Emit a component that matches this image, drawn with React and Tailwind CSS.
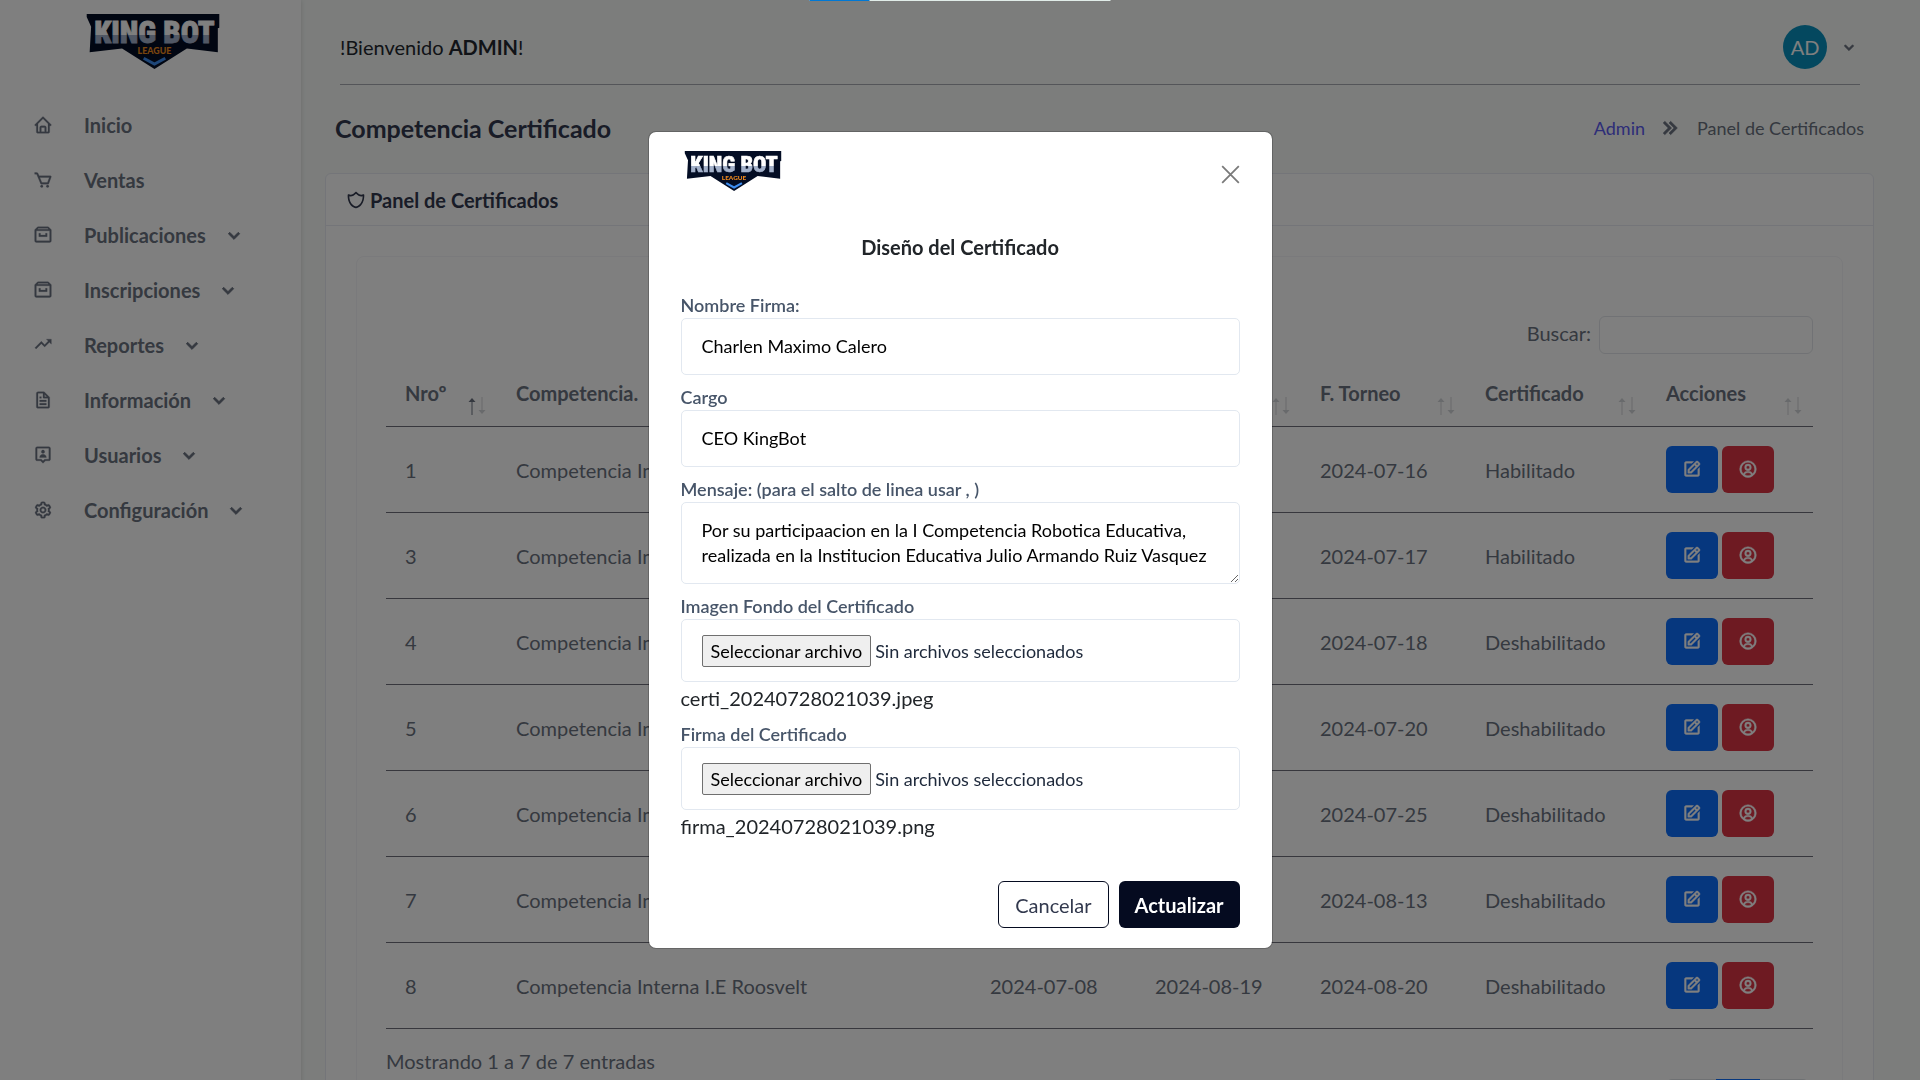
import React from "react";
import {
  BiHome, BiCart, BiArchive, BiTrendingUp, BiFile, BiUserPin, BiCog,
  BiChevronDown, BiChevronLeft, BiChevronRight, BiChevronsRight, BiEdit, BiUserCircle, BiShieldAlt2,
} from "react-icons/bi";

function Logo({ className }) {
  const id = React.useId();
  return (
    <svg viewBox="0 0 135 56" className={className} role="img" aria-label="King Bot League">
      <defs>
        <linearGradient id={id} gradientUnits="userSpaceOnUse" x1="0" y1="0" x2="0" y2="40">
          <stop offset="0.53" stopColor="#ffffff" />
          <stop offset="0.53" stopColor="#a3b1ca" />
        </linearGradient>
      </defs>
      <path d="M0 0H135V14L133.500 14.500V39L102 35L69 56L36 35L3 39L4.500 13L0 3Z" fill="#030d24" />
      <text x="69" y="30" textAnchor="middle" fontFamily="Roboto Condensed, Roboto" fontWeight="900" fontSize="31" fill={`url(#${id})`} stroke={`url(#${id})`} strokeWidth="0.8">KING BOT</text>
      <text x="69" y="41" textAnchor="middle" fontFamily="Lato" fontWeight="900" fontSize="9" fill="#f08a1d">LEAGUE</text>
      <path d="M58 45L69 51L80 45" fill="none" stroke="#3d8df0" strokeWidth="3" />
    </svg>
  );
}

const nav = [
  ["Inicio", BiHome, false],
  ["Ventas", BiCart, false],
  ["Publicaciones", BiArchive, true],
  ["Inscripciones", BiArchive, true],
  ["Reportes", BiTrendingUp, true],
  ["Información", BiFile, true],
  ["Usuarios", BiUserPin, true],
  ["Configuración", BiCog, true],
];

function Sidebar() {
  return (
    <aside className="w-[301px] shrink-0 bg-white shadow-[0_0_5px_rgba(0,0,0,0.15)]">
      <Logo className="mt-[14px] ml-[86px] h-[55px] w-[134px]" />
      <nav className="mt-7">
        {nav.map(([label, Icon, more]) => (
          <a key={label} href="#" className="flex h-[55px] items-center pl-[33px] text-xl font-bold text-[#6b7280]">
            <Icon className="size-5" stroke="currentColor" strokeWidth="0.3" />
            <span className="ml-[31px]">{label}</span>
            {more && <BiChevronDown className="ml-4 size-6" stroke="currentColor" strokeWidth="0.8" />}
          </a>
        ))}
      </nav>
    </aside>
  );
}

const columns = [
  ["Nroº", "w-[111px]"],
  ["Competencia.", "w-auto"],
  ["F. Inicio", "w-[165px]"],
  ["F. Fin", "w-[165px]"],
  ["F. Torneo", "w-[165px]"],
  ["Certificado", "w-[181px]"],
  ["Acciones", "w-[166px]"],
];

const rows = [
  [1, "Competencia Interna I.E Roosvelt", "2024-07-08", "2024-07-15", "2024-07-16", "Habilitado"],
  [3, "Competencia Interna I.E Roosvelt", "2024-07-08", "2024-07-16", "2024-07-17", "Habilitado"],
  [4, "Competencia Interna I.E Roosvelt", "2024-07-08", "2024-07-17", "2024-07-18", "Deshabilitado"],
  [5, "Competencia Interna I.E Roosvelt", "2024-07-08", "2024-07-19", "2024-07-20", "Deshabilitado"],
  [6, "Competencia Interna I.E Roosvelt", "2024-07-08", "2024-07-24", "2024-07-25", "Deshabilitado"],
  [7, "Competencia Interna I.E Roosvelt", "2024-07-08", "2024-08-12", "2024-08-13", "Deshabilitado"],
  [8, "Competencia Interna I.E Roosvelt", "2024-07-08", "2024-08-19", "2024-08-20", "Deshabilitado"],
];

function SortArrows({ active }) {
  return (
    <svg viewBox="0 0 20 18" className="h-[18px] w-5 shrink-0" fill="none" stroke="currentColor" aria-hidden="true">
      <g opacity={active ? 1 : 0.3}>
        <path d="M5 18V2" />
        <path d="M1.500 5L5 1L8.500 5Z" fill="currentColor" stroke="none" />
      </g>
      <g opacity="0.3">
        <path d="M15 0V16" />
        <path d="M11.500 13L15 17L18.500 13Z" fill="currentColor" stroke="none" />
      </g>
    </svg>
  );
}

function CertTable() {
  return (
    <table className="mt-2 w-full table-fixed text-xl text-[#6b7280]">
      <thead>
        <tr className="h-16 border-b border-[#6f6f7b]">
          {columns.map(([label, width], i) => (
            <th key={label} className={`${width} pt-1.5 pl-[19px] text-left font-bold`}>
              <div className="flex items-start justify-between pr-2.5">
                <span>{label}</span>
                <span className="mt-[18px] leading-none"><SortArrows active={i === 0} /></span>
              </div>
            </th>
          ))}
        </tr>
      </thead>
      <tbody>
        {rows.map((r) => (
          <tr key={r[0]} className="h-[86px] border-b border-[#6f6f7b]">
            {r.map((c, i) => (
              <td key={i} className="pt-0.5 pl-[19px]">{c}</td>
            ))}
            <td className="pl-[19px]">
              <div className="flex gap-1">
                <button type="button" aria-label="Editar" className="flex h-[47px] w-[52px] items-center justify-center rounded-md bg-[#0d6efd] text-white">
                  <BiEdit className="size-5" stroke="currentColor" strokeWidth="0.5" />
                </button>
                <button type="button" aria-label="Usuario" className="flex h-[47px] w-[52px] items-center justify-center rounded-md bg-[#dc3545] text-white">
                  <BiUserCircle className="size-5" stroke="currentColor" strokeWidth="0.5" />
                </button>
              </div>
            </td>
          </tr>
        ))}
      </tbody>
    </table>
  );
}

function Content() {
  return (
    <main className="min-w-0 flex-1 pr-[46px] pl-6">
      <header className="mr-[14px] ml-[15px] flex h-[85px] items-center justify-between border-b border-[#a9abb3] pt-2.5 text-xl text-[#23272e]">
        <p>!Bienvenido <b>ADMIN</b>!</p>
        <button type="button" className="flex items-center gap-3 pr-px">
          <span className="flex size-11 items-center justify-center rounded-full bg-[#0891be] text-white">AD</span>
          <BiChevronDown className="size-5 text-[#6b7280]" stroke="currentColor" strokeWidth="0.8" />
        </button>
      </header>
      <div className="mr-2.5 ml-2.5 flex h-22 items-center justify-between">
        <h1 className="text-[25px] font-bold text-[#32394e]">Competencia Certificado</h1>
        <nav className="flex items-center pb-0.5 text-lg text-[#6b7280]">
          <a href="#" className="text-[#5a5af0]">Admin</a>
          <BiChevronsRight className="mx-3 size-7" stroke="currentColor" strokeWidth="0.5" />
          <span>Panel de Certificados</span>
        </nav>
      </div>
      <section className="rounded-md border border-[#e8ebf2] bg-white">
        <h2 className="flex h-[52px] items-center gap-1 border-b border-[#e8ebf2] pl-5 text-xl font-bold text-[#32394e]">
          <BiShieldAlt2 className="size-5" />
          Panel de Certificados
        </h2>
        <div className="mx-[30px] mt-[30px] rounded-lg border border-[#f5f5f8] px-[29px] pt-[59px] pb-20">
          <div className="flex items-center justify-end gap-2 text-xl leading-6 text-[#6b7280]">
            <label htmlFor="buscar" className="pb-1">Buscar:</label>
            <input id="buscar" type="search" className="h-[38px] w-[214px] rounded-md border border-[#e2e5ea] px-2" />
          </div>
          <CertTable />
          <div className="flex items-start justify-between pr-1">
            <p className="mt-[18px] text-xl text-[#6b7280]">Mostrando 1 a 7 de 7 entradas</p>
            <nav className="mt-[50px] flex h-10 rounded-md border border-[#dee2e6] text-[#6b7280]">
              <button type="button" aria-label="Anterior" className="flex w-[49px] items-center justify-center"><BiChevronLeft className="size-5" /></button>
              <button type="button" aria-label="Página actual" className="-mt-px w-11 bg-[#0d6efd]" />
              <button type="button" aria-label="Siguiente" className="flex w-12 items-center justify-center"><BiChevronRight className="size-5" /></button>
            </nav>
          </div>
        </div>
      </section>
    </main>
  );
}

const field = "w-full rounded-[5px] border border-[#e2e8f0] bg-white px-5 text-lg text-black";

function Field({ id, label, className, children }) {
  return (
    <div className={className}>
      <label htmlFor={id} className="block h-[26px] text-lg leading-[26px] font-semibold text-[#475569]">{label}</label>
      {children}
    </div>
  );
}

function FileField({ id, label, file, className }) {
  return (
    <Field id={id} label={label} className={className}>
      <label className={`${field} flex h-[63px] items-center`}>
        <input id={id} type="file" className="sr-only" />
        <span className="flex h-8 items-center rounded-xs border border-[#6f6f6f] bg-[#efefef] px-2">Seleccionar archivo</span>
        <span className="ml-1 text-[#1e293b]">Sin archivos seleccionados</span>
      </label>
      <p className="h-[33px] text-xl leading-[32px] text-[#212529]">{file}</p>
    </Field>
  );
}

function Modal() {
  return (
    <div className="fixed inset-0 flex items-center justify-center bg-black/50">
      <form role="dialog" aria-modal="true" aria-labelledby="titulo" className="w-full max-w-[625px] rounded-lg border border-black/20 bg-white bg-clip-padding px-8 pt-[19px] pb-5">
        <div className="flex justify-between">
          <Logo className="ml-[3px] h-10 w-[98px]" />
          <button type="button" aria-label="Cerrar" className="mt-[13px] h-5 text-[#7a7a7a]">
            <svg viewBox="0 0 16 16" className="size-[19px]" fill="none" stroke="currentColor" strokeWidth="1.500"><path d="M1 1L15 15M15 1L1 15" /></svg>
          </button>
        </div>
        <h2 id="titulo" className="mt-11 text-center text-xl leading-6 font-bold text-[#212529]">Diseño del Certificado</h2>
        <Field id="nombre" label="Nombre Firma:" className="mt-[33px]">
          <input id="nombre" defaultValue="Charlen Maximo Calero" className={`${field} block h-[57px] pb-0.5`} />
        </Field>
        <Field id="cargo" label="Cargo" className="mt-[9px]">
          <input id="cargo" defaultValue="CEO KingBot" className={`${field} block h-[57px] pb-0.5`} />
        </Field>
        <Field id="mensaje" label="Mensaje: (para el salto de linea usar , )" className="mt-[9px]">
          <textarea id="mensaje" rows={2} className={`${field} block h-[82px] overflow-hidden py-[15px] leading-[25px]`} defaultValue="Por su participaacion en la I Competencia Robotica Educativa, realizada en la Institucion Educativa Julio Armando Ruiz Vasquez" />
        </Field>
        <FileField id="fondo" label="Imagen Fondo del Certificado" file="certi_20240728021039.jpeg" className="mt-[9px]" />
        <FileField id="firma" label="Firma del Certificado" file="firma_20240728021039.png" className="mt-1.5" />
        <div className="mt-[38px] flex justify-end gap-2.5 text-xl">
          <button type="button" className="h-[47px] rounded-md border border-[#050b20] px-4 text-[#32394e]">Cancelar</button>
          <button type="submit" className="h-[47px] rounded-md bg-[#050b20] px-4 font-bold text-white">Actualizar</button>
        </div>
      </form>
    </div>
  );
}

export default function App() {
  return (
    <div className="h-screen overflow-hidden bg-[#f8fbf9] font-[Lato,sans-serif]">
      <div className="flex">
        <Sidebar />
        <Content />
      </div>
      <Modal />
      <div className="fixed top-0 left-1/2 h-px w-[301px] -translate-x-1/2 bg-[#e0ece8]">
        <div className="h-px w-1/5 bg-[#0078d4]" />
      </div>
    </div>
  );
}
